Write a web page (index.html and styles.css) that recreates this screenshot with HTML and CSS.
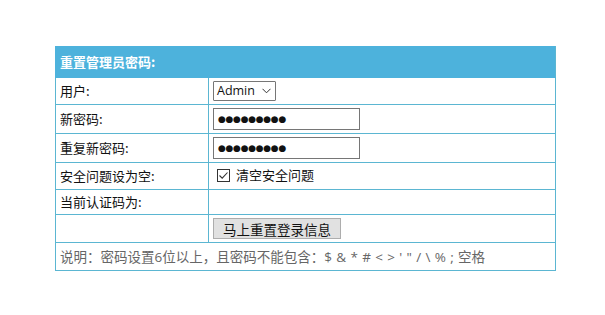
FILE: index.html
```html
<!DOCTYPE html>
<html lang="zh-CN">
<head>
  <meta charset="UTF-8" />
  <title>重置管理员密码</title>
  <link rel="stylesheet" href="styles.css">
</head>
<body>
  <div class="wrap">
    <table class="reset-table">
      <tr class="head">
        <th colspan="2">重置管理员密码:</th>
      </tr>
      <tr class="r-user">
        <td class="label">用户:</td>
        <td>
          <span class="select">Admin <svg width="9" height="6" viewBox="0 0 9 6"><path d="M0.5 0.8 L4.5 4.8 L8.5 0.8" fill="none" stroke="#333" stroke-width="1"/></svg></span>
        </td>
      </tr>
      <tr class="r-pass">
        <td class="label">新密码:</td>
        <td><span class="pwd">●●●●●●●●●</span></td>
      </tr>
      <tr class="r-pass">
        <td class="label">重复新密码:</td>
        <td><span class="pwd">●●●●●●●●●</span></td>
      </tr>
      <tr class="r-check">
        <td class="label">安全问题设为空:</td>
        <td>
          <label class="check">
            <svg width="13" height="13" viewBox="0 0 13 13"><rect x="0.5" y="0.5" width="12" height="12" fill="#fff" stroke="#333"/><path d="M2.5 6.5 L5.2 9.2 L10.5 3.5" fill="none" stroke="#333" stroke-width="1.1"/></svg>
            清空安全问题
          </label>
        </td>
      </tr>
      <tr class="r-code">
        <td class="label">当前认证码为:</td>
        <td></td>
      </tr>
      <tr class="r-btn">
        <td></td>
        <td><button type="button">马上重置登录信息</button></td>
      </tr>
      <tr class="note">
        <td colspan="2">说明：密码设置6位以上，且密码不能包含：$ &amp; * # &lt; &gt; ' " / \ % ; 空格</td>
      </tr>
    </table>
  </div>
</body>
</html>
```

FILE: styles.css
```css
body {
  margin: 0;
  background: #fff;
  font-family: "Noto Sans CJK SC", "Noto Sans", sans-serif;
  font-size: 13px;
  color: #111;
}
.wrap {
  padding: 46px 0 0 55px;
}
.reset-table {
  width: 501px;
  border-collapse: collapse;
}
.reset-table th,
.reset-table td {
  border: 1px solid #5bb6d2;
  padding: 0 4px;
  text-align: left;
  line-height: 18px;
}
.head th {
  background: #4db2dc;
  color: #fff;
  font-weight: bold;
  height: 30px;
  border-color: #4db2dc;
  border-right-color: #5bb6d2;
}
.label {
  width: 144px;
}
.r-user td { height: 26px; }
.r-pass td { height: 28px; }
.r-check td { height: 26px; }
.r-code td { height: 24px; }
.r-btn td { height: 27px; }
.note td {
  height: 27px;
  color: #666;
  font-family: "Open Sans", "Noto Sans CJK SC", sans-serif;
  font-size: 13.5px;
  word-spacing: 0.8px;
}
.select {
  display: inline-flex;
  align-items: center;
  gap: 7px;
  height: 18px;
  padding: 0 4px 0 3px;
  border: 1px solid #767676;
  border-radius: 1px;
  font-family: "Open Sans", sans-serif;
  font-size: 12.5px;
}
.pwd {
  display: block;
  width: 137px;
  height: 20px;
  border: 1px solid #767676;
  padding: 0 4px;
  font-family: "DejaVu Sans", sans-serif;
  font-size: 9px;
  letter-spacing: -0.3px;
  line-height: 20px;
  color: #111;
}
.check {
  display: inline-flex;
  align-items: center;
  gap: 6px;
  padding-left: 4px;
}
button {
  font-family: "Noto Sans CJK SC", sans-serif;
  font-size: 13.5px;
  padding: 0 9px;
  height: 21px;
  background: #e1e1e1;
  border: 1px solid #adadad;
  color: #111;
  margin-left: 0;
}
```
